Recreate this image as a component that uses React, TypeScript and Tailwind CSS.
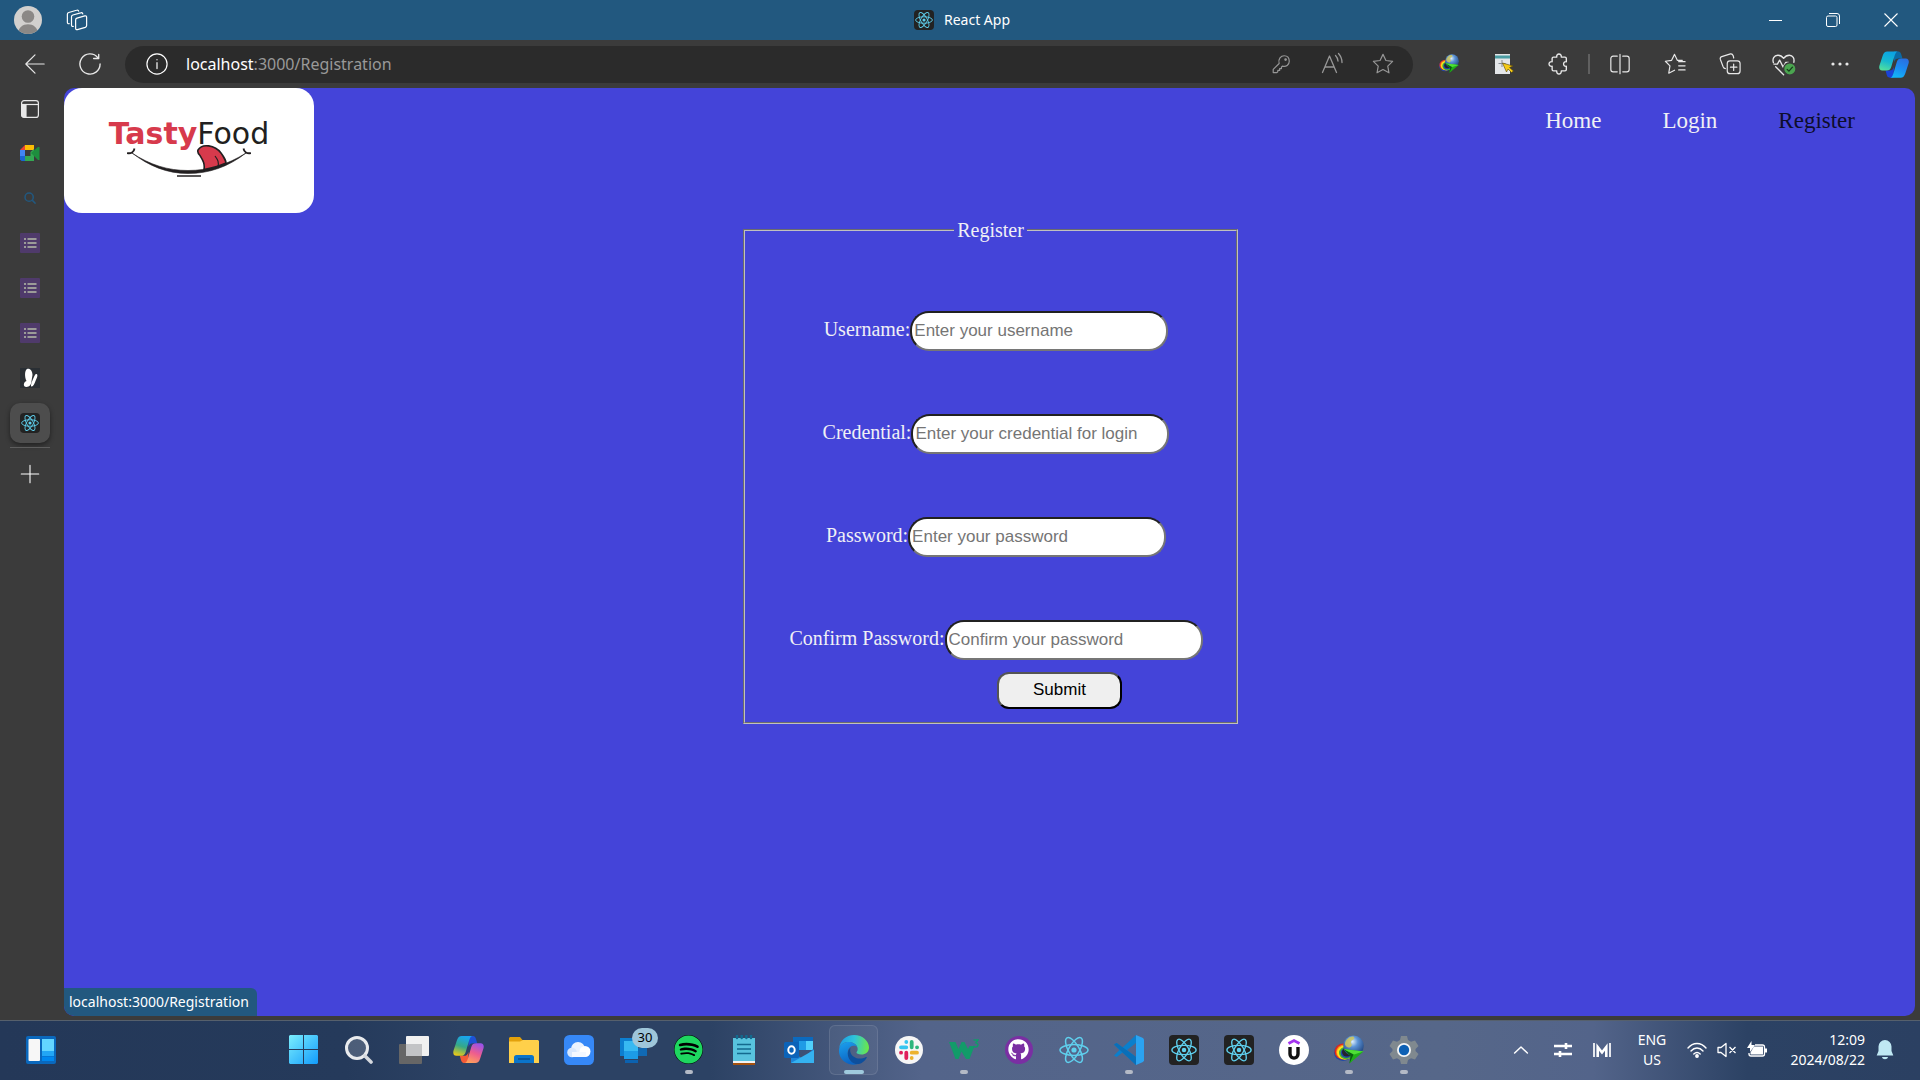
import type { ReactNode } from "react";
import { FaGithub, FaSpotify } from "react-icons/fa";

type IconProps = { className?: string };

function ReactAtom({ className }: IconProps) {
  return (
    <svg viewBox="0 0 30 30" className={className} fill="none" stroke="#5fd0ee" strokeWidth="1.5" aria-hidden="true">
      <ellipse cx="15" cy="15" rx="14" ry="5.4" />
      <ellipse cx="15" cy="15" rx="14" ry="5.4" transform="rotate(60 15 15)" />
      <ellipse cx="15" cy="15" rx="14" ry="5.4" transform="rotate(120 15 15)" />
      <circle cx="15" cy="15" r="2.6" fill="#5fd0ee" stroke="none" />
    </svg>
  );
}

function ReactTile({ size }: { size: "sm" | "lg" }) {
  return size === "sm" ? (
    <span className="flex size-5 items-center justify-center rounded-sm bg-[#222]">
      <ReactAtom className="size-[18px]" />
    </span>
  ) : (
    <span className="flex size-[30px] items-center justify-center rounded bg-[#222]">
      <ReactAtom className="size-[26px]" />
    </span>
  );
}

function Line({ children, className = "size-6", w = 1.3 }: { children: ReactNode; className?: string; w?: number }) {
  return (
    <svg viewBox="0 0 24 24" className={className} fill="none" stroke="currentColor" strokeWidth={w} strokeLinecap="round" strokeLinejoin="round" aria-hidden="true">
      {children}
    </svg>
  );
}

function IdmIcon({ className }: IconProps) {
  return (
    <svg viewBox="0 0 30 30" className={className} aria-hidden="true">
      <defs>
        <radialGradient id="globe" cx="0.45" cy="0.3" r="0.75">
          <stop offset="0" stopColor="#dfeefb" />
          <stop offset="0.35" stopColor="#5b93d6" />
          <stop offset="1" stopColor="#17376f" />
        </radialGradient>
      </defs>
      <ellipse cx="9" cy="17.500" rx="9" ry="8.500" fill="#1f49a8" />
      <ellipse cx="9.500" cy="16.500" rx="9" ry="8" fill="#de2a1f" />
      <ellipse cx="10.500" cy="17" rx="8.500" ry="7.500" fill="#f58a1c" />
      <ellipse cx="11" cy="17.500" rx="8" ry="7" fill="#ffe01f" />
      <ellipse cx="12" cy="18" rx="7" ry="6.200" fill="#45b52f" />
      <ellipse cx="12.500" cy="18" rx="5.800" ry="5" fill="#2146a8" />
      <ellipse cx="13" cy="17" rx="5" ry="4.500" fill="#22252c" />
      <circle cx="19.500" cy="10.800" r="10.300" fill="url(#globe)" />
      <path d="M11 8c1-4 5-7 8-6.500 2 .6 1.500 3-.5 3.500s-2 2.500-1 4-1 4-3 3.500-4-2-3.500-4.500z" fill="#cfc55a" opacity=".85" />
      <path d="M9.500 14 29.500 16.500 15.500 28.500l1-7.500z" fill="#1fae19" />
      <path d="m9.500 14 7 7-1 7.500 4-9z" fill="#0a5e10" />
      <path d="m9.500 14 20 2.500-9.500 3z" fill="#4fe036" />
    </svg>
  );
}

function CopilotIcon({ className, warm }: IconProps & { warm?: boolean }) {
  const a = warm ? "cw1" : "cb1";
  const b = warm ? "cw2" : "cb2";
  return (
    <svg viewBox="0 0 32 28" className={className} aria-hidden="true">
      <defs>
        <linearGradient id={a} x1="0.5" y1="0" x2="0.2" y2="1">
          <stop offset="0" stopColor={warm ? "#19a6ee" : "#0ba3e3"} />
          <stop offset="0.5" stopColor={warm ? "#35a987" : "#17b8cf"} />
          <stop offset="1" stopColor={warm ? "#f0cb15" : "#55e29b"} />
        </linearGradient>
        <linearGradient id={b} x1="0.7" y1="0" x2="0.3" y2="1">
          <stop offset="0" stopColor={warm ? "#9a52e8" : "#2a6fe0"} />
          <stop offset="0.5" stopColor={warm ? "#ee5d8e" : "#1b8cf2"} />
          <stop offset="1" stopColor={warm ? "#ffa15c" : "#12b7f7"} />
        </linearGradient>
      </defs>
      <path d="M16 0h4c3 0 3.500 2 4.300 5l.7 2.500h-4c-3 0-4 1-5 4z" fill={warm ? "#1e52d6" : "#0b6aa5"} />
      <path d="M15.500 28H12c-3 0-3.500-2-4.300-5L7 20.500h4c3 0 4-1 5-4z" fill={warm ? "#f35b37" : "#1a43d8"} />
      <path d="M9 0h11c-2 .6-2.500 2-3.300 4.500l-3.600 12c-.9 3-2.300 4-5.100 4H3.500C.5 20.500-.3 18 .5 15L4 4.500C5 1.500 6.300 0 9 0z" fill={`url(#${a})`} />
      <path d="M23 28H12c2-.6 2.500-2 3.300-4.500l3.600-12c.9-3 2.300-4 5.100-4h4.500c3 0 3.800 2.500 3 5.500L28 23.500c-1 3-2.300 4.500-5 4.500z" fill={`url(#${b})`} />
    </svg>
  );
}

function EdgeIcon() {
  return (
    <svg viewBox="0 0 30 30" className="size-[30px]" aria-hidden="true">
      <defs>
        <linearGradient id="eg" x1="0" y1="0.3" x2="1" y2="0.4">
          <stop offset="0" stopColor="#1b9ce8" />
          <stop offset="0.5" stopColor="#2fc4d9" />
          <stop offset="1" stopColor="#6ae849" />
        </linearGradient>
        <linearGradient id="eb" x1="0" y1="0" x2="0.3" y2="1">
          <stop offset="0" stopColor="#1ba1ee" />
          <stop offset="1" stopColor="#0c65c4" />
        </linearGradient>
      </defs>
      <path d="M.2 13.500C1 5.500 7 0 15 0c9 0 15 6.500 15 12.500 0 4.500-3.500 7-7.500 7-3.500 0-5-1.200-5-2 0-.7 1.200-1.200 1.200-3.500C18.700 10 14.500 7 9.500 7 5 7 1.500 9.500.2 13.500z" fill="url(#eg)" />
      <path d="M.2 13.500C1.500 9.500 5 7 9.500 7c4 0 7.500 2 8.700 5-1-1-2.500-1.500-4-1.200C10 11.500 8 15.500 9 20c1 5 5 8.500 10 9-7 2.500-17-1.500-18.800-10.500C-.1 17 0 15 .2 13.500z" fill="url(#eb)" />
      <path d="M11.500 12.500C8 16 8 21 11 25c2.500 3.500 6.500 4.500 9 4 3-.8 6-3.200 7.700-6.300.3-.5-.2-.9-.7-.6-7 3.500-14 .4-15.500-4.600-.5-1.800-.4-3.500 0-5z" fill="#0e4f9c" />
    </svg>
  );
}

function SlackIcon() {
  return (
    <svg viewBox="0 0 28 28" className="size-7" aria-hidden="true">
      <circle cx="14" cy="14" r="14" fill="#f6f6f6" />
      <g strokeWidth="3.800" strokeLinecap="round">
        <path d="M11.300 6v.1M6 11.300h5.300" stroke="#36c5f0" />
        <path d="M16.700 6v5.300M22 11.300h.1" stroke="#2eb67d" />
        <path d="M16.700 16.700H22M16.700 22v.1" stroke="#ecb22e" />
        <path d="M11.300 16.700V22M6 16.700h.1" stroke="#e01e5a" />
      </g>
    </svg>
  );
}

function WidgetsIcon() {
  return (
    <svg viewBox="0 0 30 28" className="h-7 w-[30px]" aria-hidden="true">
      <rect width="30" height="28" rx="2" fill="#0a68bd" />
      <rect x="2.500" y="3" width="11.500" height="22" rx="1" fill="#f7f7f7" />
      <path d="M16 3h12v12H16z" fill="#63d5ff" />
      <path d="M16 15h12v5H16z" fill="#22a6f5" />
      <path d="M16 20.500h12V25H16z" fill="#0087ee" />
    </svg>
  );
}

function StartIcon() {
  return (
    <svg viewBox="0 0 29 29" className="size-[29px]" aria-hidden="true">
      <defs>
        <linearGradient id="win" gradientUnits="userSpaceOnUse" x1="0" y1="0" x2="29" y2="29">
          <stop offset="0" stopColor="#7beefd" />
          <stop offset="1" stopColor="#129bfb" />
        </linearGradient>
      </defs>
      <path d="M1 0h13v14H0V1zM15 0h13l1 1v13H15zM0 15h14v14H1l-1-1zM15 15h14v13l-1 1H15z" fill="url(#win)" />
    </svg>
  );
}

function SearchIcon() {
  return (
    <svg viewBox="0 0 28 28" className="size-7" aria-hidden="true">
      <circle cx="12" cy="12" r="10.500" fill="#ffffff" fillOpacity=".18" stroke="#e9ebee" strokeWidth="3" />
      <path d="m20 20 6 6" stroke="#d5d9df" strokeWidth="3.600" strokeLinecap="round" />
    </svg>
  );
}

function TaskViewIcon() {
  return (
    <svg viewBox="0 0 30 28" className="h-7 w-[30px]" aria-hidden="true">
      <rect y="8" width="23" height="20" rx="1" fill="#666" />
      <rect x="7" width="23" height="20" rx="1" fill="#f1f1f1" />
      <path d="M7 8h16v12H7z" fill="#c3c4c6" />
    </svg>
  );
}

function ExplorerIcon() {
  return (
    <svg viewBox="0 0 30 28" className="h-7 w-[30px]" aria-hidden="true">
      <path d="M1 1h10l2.500 3H28v5H0V2z" fill="#e3a10b" />
      <path d="M0 5.500h11L14 4h15l1 1v22H0z" fill="#ffd04a" />
      <path d="M5 27v-5.500A2.500 2.500 0 0 1 7.500 19h15a2.500 2.500 0 0 1 2.500 2.500V27z" fill="#0b74ca" />
      <path d="M9 23h12" stroke="#0a4b88" strokeWidth="1.400" />
    </svg>
  );
}

function CloudIcon() {
  return (
    <svg viewBox="0 0 30 30" className="size-[30px]" aria-hidden="true">
      <rect width="30" height="30" rx="5.500" fill="#3688f7" />
      <circle cx="14" cy="14" r="7" fill="#eaf2fe" />
      <circle cx="8" cy="17.500" r="4.800" fill="#d8e7fd" />
      <circle cx="21" cy="16.500" r="5.500" fill="#fff" />
      <path d="M8 17h14v5H8z" fill="#f4f8ff" />
    </svg>
  );
}

function PhoneLinkIcon() {
  return (
    <span className="relative block">
      <svg viewBox="0 0 27 27" className="size-[27px]" aria-hidden="true">
        <path d="M0 2h14v18H0z" fill="#0d7fd0" />
        <path d="M12 12h15v8H12z" fill="#1069b4" />
        <path d="M4 5h14v18H4z" fill="#37b9f2" />
        <path d="M4 15h14v8H4z" fill="#1c9be6" />
        <path d="M5 24h13v3H5z" fill="#0c62b0" />
      </svg>
      <span className="absolute -top-2 left-3 flex h-5 w-[26px] items-center justify-center rounded-full bg-[#9ec6da] text-[13px] text-black">30</span>
    </span>
  );
}

function NotepadIcon() {
  return (
    <svg viewBox="0 0 22 30" className="h-[30px] w-[22px]" aria-hidden="true">
      <path d="M0 26h22v4H0z" fill="#a5520e" />
      <path d="M0 3h22v25H0z" fill="#58c3de" />
      <path d="M0 26h22v2H0z" fill="#f2f2f2" />
      <path d="M4 9.500h14M4 14h14M4 18.500h14" stroke="#136a8e" strokeWidth="1.600" />
      <path d="M4 0v3M8.700 0v3M13.400 0v3M18 0v3" stroke="#136a8e" strokeWidth="2.400" strokeLinecap="round" />
    </svg>
  );
}

function OutlookIcon() {
  return (
    <svg viewBox="0 0 30 28" className="h-7 w-[30px]" aria-hidden="true">
      <path d="M9 1h20v12H9z" fill="#0b6abf" />
      <path d="M15 5h7v9h-7z" fill="#1f9be6" />
      <path d="M22 5h7v9h-7z" fill="#50d0fb" />
      <path d="m29 13 1 1v13H7V15l12 8z" fill="#1c84d8" />
      <path d="m30 14-23 13h23z" fill="#35b2f0" />
      <rect y="6" width="15" height="16" rx="1.500" fill="#0c63b8" />
      <ellipse cx="7.500" cy="14" rx="3.200" ry="3.700" fill="none" stroke="#fff" strokeWidth="2" />
    </svg>
  );
}

function W3Icon() {
  return (
    <svg viewBox="0 0 30 22" className="h-[22px] w-[30px]" fill="#129b69" aria-hidden="true">
      <path d="M0 3h6.500l3 7 3-7h3l3.500 7 1.500-3h5L20.500 20H17l-4.500-7.500L9.500 20H6.500z" />
      <path d="M24.500 1h4.500l-2.200 2.800c3.200.6 2.500 4.200-.4 4.200-1 0-1.600-.4-2-1.200" fill="none" stroke="#129b69" strokeWidth="1.500" />
    </svg>
  );
}

function VsCodeIcon() {
  return (
    <svg viewBox="0 0 30 30" className="size-[30px]" aria-hidden="true">
      <path d="M22 0 8.500 12.500 2.700 8 0 9.500 5.500 15 0 20.500 2.700 22l5.800-4.500L22 30V22l-9-7 9-7z" fill="#0b7fcc" />
      <path d="m0 9.500 2.700-1.500L22 22v8z" fill="#0a6fb8" />
      <path d="m22 0 7 3 1 1.500v21L29 27l-7 3z" fill="#2ba3f1" />
    </svg>
  );
}

function UdemyIcon() {
  return (
    <svg viewBox="0 0 30 30" className="size-[30px]" fill="none" aria-hidden="true">
      <circle cx="15" cy="15" r="15" fill="#fff" />
      <path d="m9.500 8.500 5.500-3 5.500 3" stroke="#a435f0" strokeWidth="2.800" />
      <path d="M11 12v7c0 5.500 8 5.500 8 0v-7" stroke="#111" strokeWidth="3.400" />
    </svg>
  );
}

function SettingsIcon() {
  return (
    <svg viewBox="0 0 30 30" className="size-[30px]" aria-hidden="true">
      <path d="M12 1h6l1 4 3 1.700 4-1.200 3.500 5.500-3 3v2l3 3-3.500 5.500-4-1.200L19 25l-1 4h-6l-1-4-3-1.700-4 1.200L.5 19l3-3v-2l-3-3L4 5.500l4 1.200L11 5z" fill="#80898f" />
      <circle cx="15" cy="15" r="7" fill="#f4f6f7" />
      <circle cx="15" cy="15" r="5.200" fill="#0e61b4" />
    </svg>
  );
}

function TitleBar() {
  return (
    <header className="grid h-10 shrink-0 grid-cols-[1fr_auto_1fr] items-center bg-[#22587f] text-white">
      <div className="flex items-center gap-6 pl-[14px]">
        <button type="button" aria-label="Profile">
          <svg viewBox="0 0 28 28" className="size-7" aria-hidden="true">
            <clipPath id="av"><circle cx="14" cy="14" r="14" /></clipPath>
            <g clipPath="url(#av)">
              <path d="M0 0h28v28H0z" fill="#d2d0ce" />
              <circle cx="14" cy="10.500" r="6.300" fill="#8b8886" />
              <path d="M4 28c0-13 20-13 20 0z" fill="#8b8886" />
            </g>
          </svg>
        </button>
        <button type="button" aria-label="Workspaces">
          <Line className="size-[22px]">
            <path d="M12 10 20.500 7.500c1.200-.3 2 .2 2 1.500v9c0 1-.5 1.600-1.500 2L12.500 22.500c-1.200.3-2-.3-2-1.500v-9c0-1.200.5-1.700 1.500-2z" />
            <path d="M8 19c-1.200.3-2-.3-2-1.500V8.500c0-1 .5-1.700 1.500-2L16 4.200c1.300-.4 2 0 2.300 1.200" />
            <path d="M3.500 16c-1.200.3-2-.3-2-1.500V5.800c0-1 .5-1.700 1.500-2l8.500-2.400c1.300-.4 2 0 2.300 1" />
          </Line>
        </button>
      </div>
      <div className="flex items-center gap-2.5 pl-1 text-sm">
        <ReactTile size="sm" />
        <span>React App</span>
      </div>
      <div className="flex items-center justify-end">
        <button type="button" aria-label="Minimize" className="flex h-10 w-[58px] items-center justify-center">
          <span className="h-px w-[13px] bg-white" />
        </button>
        <button type="button" aria-label="Restore" className="flex h-10 w-[58px] items-center justify-center">
          <svg viewBox="0 0 14 14" className="h-3.5 w-3.5" fill="none" stroke="#fff" aria-hidden="true">
            <rect x=".5" y="3" width="10.500" height="10.500" rx="1.500" />
            <path d="M3 .5h8a2.500 2.500 0 0 1 2.500 2.500v8" />
          </svg>
        </button>
        <button type="button" aria-label="Close" className="flex h-10 w-[58px] items-center justify-center">
          <svg viewBox="0 0 14 14" className="h-3.5 w-3.5" fill="none" stroke="#fff" strokeWidth="1.100" aria-hidden="true">
            <path d="m.5.5 13 13m0-13-13 13" />
          </svg>
        </button>
      </div>
    </header>
  );
}

function ToolButton({ label, children }: { label: string; children: ReactNode }) {
  return (
    <button type="button" aria-label={label} className="flex h-10 w-[55px] shrink-0 items-center justify-center">
      {children}
    </button>
  );
}

function Toolbar() {
  return (
    <div className="flex h-12 shrink-0 items-center bg-[#3b3b3b] pl-[7px] text-[#e8e8e8]">
      <ToolButton label="Back">
        <Line className="size-[22px]"><path d="M22 12H2M12 2 2 12l10 10" /></Line>
      </ToolButton>
      <ToolButton label="Refresh">
        <Line className="size-[22px]" w={1.5}><path d="M20.500 5A11 11 0 1 0 23 12M21.500 1.500v4.500H16" /></Line>
      </ToolButton>
      <div className="ml-2 flex h-[37px] min-w-0 flex-1 items-center rounded-full bg-[#2b2b2b] pr-[19px] pl-[21px]">
        <Line className="size-[22px] shrink-0 text-white">
          <circle cx="12" cy="12" r="11" />
          <path d="M12 10.500v6.500M12 7.200v.2" />
        </Line>
        <label className="relative ml-[18px] flex-1 text-base">
          <input aria-label="Address" defaultValue="localhost:3000/Registration" className="w-full bg-transparent text-transparent outline-none" />
          <span aria-hidden="true" className="pointer-events-none absolute inset-0 text-[#999]">
            <span className="text-white">localhost</span>:3000/Registration
          </span>
        </label>
        <div className="flex w-[124px] shrink-0 items-center justify-between text-[#979797]">
          <button type="button" aria-label="Passwords">
            <Line className="size-[22px]">
              <path d="M10 11.500C8.500 6.500 12 3 15.500 3S21 5.500 21 9c0 4-3.500 6.500-7.500 5.300L12.500 15.500V17h-2v2H8.500v1.500l-1 .9H3.500v-3.600z" />
              <circle cx="17" cy="7.200" r=".8" fill="currentColor" />
            </Line>
          </button>
          <button type="button" aria-label="Read aloud">
            <Line className="size-6">
              <path d="M2.500 20.500 9.500 4l7 16.500M5 15h9M15.500 3.500c1.500 1.500 2.300 3.500 2.500 5.500M18.500 1.500c2.300 2.500 3.500 5.500 3.500 9" />
            </Line>
          </button>
          <button type="button" aria-label="Favorite">
            <Line className="size-[22px]">
              <path d="m12 1.500 3.200 6.700 7.300 1-5.300 5.100 1.300 7.300L12 18.100l-6.500 3.500 1.300-7.300L1.500 9.200l7.300-1z" />
            </Line>
          </button>
        </div>
      </div>
      <span className="w-2 shrink-0" />
      <ToolButton label="Download manager"><IdmIcon className="size-5" /></ToolButton>
      <ToolButton label="Page picker">
        <svg viewBox="0 0 20 20" className="size-5" aria-hidden="true">
          <path d="M1 0h15v20H1z" fill="#e4e6e8" />
          <path d="M1 1.500h15v3H1z" fill="#4b9da3" />
          <path d="M8 6v7M4.500 9.500h7" stroke="#858b92" />
          <path d="m8.500 9 10.500 3-3.500 1.500 4 3.500-2 1.500-3.500-3.500L12.500 18z" fill="#f5cb17" stroke="#5a4706" strokeWidth=".6" />
        </svg>
      </ToolButton>
      <ToolButton label="Extensions">
        <Line className="size-[22px]" w={1.5}>
          <path d="M6 4.500h3.500c-.6-4.500 5.500-4.500 5 0h4c1 0 1.500.5 1.500 1.500v3.500c-4-.6-4 5.600 0 5v3.500c0 1-.5 1.500-1.500 1.500h-4c.5 4.500-5.600 4.500-5 0H6c-1 0-1.500-.5-1.500-1.500v-3.500c-4.500.6-4.500-5.600 0-5V6c0-1 .5-1.500 1.500-1.500z" />
        </Line>
      </ToolButton>
      <span className="mx-[2px] h-5 w-[2px] shrink-0 bg-[#606060]" />
      <ToolButton label="Split screen">
        <Line className="size-[22px]">
          <path d="M9 3.500H4.500C3 3.500 2 4.500 2 6v12c0 1.500 1 2.500 2.500 2.500H9M15 3.500h4.500C21 3.500 22 4.500 22 6v12c0 1.500-1 2.500-2.500 2.500H15M12 1.500v21" />
        </Line>
      </ToolButton>
      <ToolButton label="Favorites">
        <Line className="size-[22px]">
          <path d="M16 9.500h7M16 14h7M16 18.500h7M20 8h-5.500L11.500 1.500 8.300 8 1.500 9l5 5-1.300 8 6.300-3.200" />
        </Line>
      </ToolButton>
      <ToolButton label="Collections">
        <Line className="size-[22px]">
          <rect x="9" y="8.500" width="14" height="14" rx="3" />
          <path d="M16 12v7M12.500 15.500h7M7 17c-1.500 0-2-.8-2.500-2L1.500 7c-.5-1.500 0-2.500 1.500-3l9.500-3c1.500-.4 2.300.3 3 2l.6 2.500" />
        </Line>
      </ToolButton>
      <ToolButton label="Browser essentials">
        <svg viewBox="0 0 28 26" className="h-[23px] w-[25px]" fill="none" stroke="currentColor" strokeWidth="1.500" strokeLinejoin="round" strokeLinecap="round" aria-hidden="true">
          <path d="M1.500 11C0 7 2 2.500 6.500 2.500c3 0 5 1.500 6.500 3.500 1.500-2 3.500-3.500 6.500-3.500 4 0 6 4 5 8M4 15.500l9 9" />
          <path d="M2 12.500h4l2.500-4.500 4 8 3-5.500h3" />
          <circle cx="20" cy="18" r="7" fill="#4ba550" stroke="#3b3b3b" />
          <path d="m17 18.500 2 2 4-4.500" stroke="#173d1b" />
        </svg>
      </ToolButton>
      <ToolButton label="More">
        <svg viewBox="0 0 18 4" className="h-1 w-[18px]" fill="currentColor" aria-hidden="true">
          <circle cx="2" cy="2" r="1.600" /><circle cx="9" cy="2" r="1.600" /><circle cx="16" cy="2" r="1.600" />
        </svg>
      </ToolButton>
      <button type="button" aria-label="Copilot" className="flex w-[53px] shrink-0 justify-center">
        <CopilotIcon className="h-[27px] w-[30px]" />
      </button>
    </div>
  );
}

function SideTab({ label, children }: { label: string; children: ReactNode }) {
  return (
    <button type="button" aria-label={label} className="flex h-[45px] w-full items-center justify-center">
      {children}
    </button>
  );
}

function NotesTile() {
  return (
    <svg viewBox="0 0 20 20" className="size-5" aria-hidden="true">
      <rect width="20" height="20" rx="1" fill="#4f3a6b" />
      <path d="M4 6h2M4 10h2M4 14h2M7.500 6h9M7.500 10h9M7.500 14h9" stroke="#9b9b98" strokeWidth="2" />
    </svg>
  );
}

function SideBar() {
  return (
    <nav aria-label="Tabs" className="flex w-16 shrink-0 flex-col items-center pr-[5px]">
      <button type="button" aria-label="Tab actions" className="flex h-[42px] w-full items-center justify-center text-[#e8e8e8]">
        <svg viewBox="0 0 18 18" className="size-[18px]" fill="none" stroke="currentColor" strokeWidth="1.200" aria-hidden="true">
          <rect x=".6" y=".6" width="16.800" height="16.800" rx="2.500" />
          <path d="M1 4.500h16" />
          <path d="M1 4.500h4V17H2l-1-1z" fill="currentColor" />
        </svg>
      </button>
      <SideTab label="Meet">
        <svg viewBox="0 0 20 16" className="h-4 w-5" aria-hidden="true">
          <path d="M5 0v5H0z" fill="#ea4335" />
          <path d="M5 0h9v5H5z" fill="#fbbc04" />
          <path d="M0 5h5v6H0z" fill="#4285f4" />
          <path d="M0 11h5v5H1.500L0 14.500z" fill="#1967d2" />
          <path d="M5 11h5.500V7L14 4v12H5z" fill="#34a853" />
          <path d="m11 8 7-6h1.500v13H18z" fill="#1e8e3e" />
        </svg>
      </SideTab>
      <SideTab label="Search">
        <svg viewBox="0 0 14 14" className="h-3 w-3" fill="none" stroke="#22587f" strokeWidth="1.800" aria-hidden="true">
          <circle cx="6" cy="6" r="4.800" /><path d="m9.500 9.500 4 4" />
        </svg>
      </SideTab>
      <SideTab label="Notes 1"><NotesTile /></SideTab>
      <SideTab label="Notes 2"><NotesTile /></SideTab>
      <SideTab label="Notes 3"><NotesTile /></SideTab>
      <SideTab label="Butterfly">
        <svg viewBox="0 0 20 20" className="size-5" aria-hidden="true">
          <path d="M0 0h20v20H0z" fill="#2a2f34" />
          <path d="M7 1c3-1 5.500 2 5.500 6l-1 6c0 3-2 6-5 6-4 0-3-5 0-6C4.500 9 4.500 2.500 7 1zM16.500 6c1.500.5 1 3-1 7-1 3-2.500 6-4 5.500s.5-5 2-8.500 2-4.500 3-4z" fill="#fff" />
        </svg>
      </SideTab>
      <SideTab label="React App">
        <span className="flex size-10 items-center justify-center rounded-[10px] bg-[#4d4d4d] shadow-[0_2px_5px_rgba(0,0,0,0.45)]">
          <ReactTile size="sm" />
        </span>
      </SideTab>
      <span className="mt-[2px] h-px w-10 bg-[#5e5e5e]" />
      <button type="button" aria-label="New tab" className="mt-4 text-white">
        <Line className="size-5" w={1.3}><path d="M12 1.500v21M1.500 12h21" /></Line>
      </button>
    </nav>
  );
}

function Logo() {
  return (
    <div className="flex h-[125px] w-[250px] flex-col items-center rounded-[18px] bg-white pt-7">
      <p className="font-['DejaVu_Sans',sans-serif] text-[30px] leading-9 text-[#221f20]">
        <span className="font-bold text-[#d73a4c]">Tasty</span>Food
      </p>
      <svg viewBox="0 0 124 34" className="-mt-2 h-[34px] w-[124px]" fill="none" aria-hidden="true">
        <path d="M5 9c18 12 36 17.500 56 17.500S100 21 119 9c-18 14-37 20.500-58 20.500S22 22 5 9z" fill="#221f20" stroke="#221f20" strokeWidth=".6" />
        <path d="M0 9c4 1 7-1 7.500-4.500M124 9c-4 1-7-1-7.500-4.500" stroke="#221f20" strokeWidth="1.800" />
        <path d="M71 6c4-7 17-5 23 3 3 4 5 9 5 10-6 3-14 5-22 6.500 1-6-1-9-4-14-1-1-3-3-2-5.500z" fill="#d73a4c" stroke="#221f20" strokeWidth="1.600" />
        <path d="M88 12c3 4 4 6 3 11" stroke="#221f20" strokeWidth="1.200" />
        <path d="M50 32h24" stroke="#221f20" strokeWidth="1.500" />
      </svg>
    </div>
  );
}

const fields = [
  { id: "username", label: "Username:", type: "text", hint: "Enter your username" },
  { id: "credential", label: "Credential:", type: "text", hint: "Enter your credential for login" },
  { id: "password", label: "Password:", type: "password", hint: "Enter your password" },
  { id: "confirm", label: "Confirm Password:", type: "password", hint: "Confirm your password" },
];

function Page() {
  return (
    <main className="relative mr-[5px] mb-1 min-w-0 flex-1 overflow-hidden rounded-[10px] bg-[#4444d9] font-['Liberation_Serif',serif] text-[#f0f0f5]">
      <div className="flex items-start justify-between">
        <Logo />
        <nav aria-label="Main" className="flex gap-[61px] pt-[19px] pr-[60px] text-[23px] leading-7">
          <a href="#home">Home</a>
          <a href="#login">Login</a>
          <a href="#register" className="text-[#0d0d2b]">Register</a>
        </nav>
      </div>
      <form className="mt-[5px] flex justify-center pl-[2px]" onSubmit={(e) => e.preventDefault()}>
        <fieldset className="w-[495px] border-2 border-[#c0c0c0] pb-[13px] [border-style:groove]">
          <legend className="mx-auto px-[3px] text-xl leading-6">Register</legend>
          <div className="flex flex-col items-center gap-[63px] pt-[67px] pl-[11px]">
            {fields.map((f) => (
              <div key={f.id} className="flex h-10 items-baseline text-xl leading-10">
                <label htmlFor={f.id}>{f.label}</label>
                <input
                  id={f.id}
                  type={f.type}
                  placeholder={f.hint}
                  className="h-10 w-[258px] rounded-[19px] border-2 border-[#767676] bg-white px-[2px] font-['Liberation_Sans',sans-serif] text-[17px] text-black [border-style:inset] placeholder:text-[#757575]"
                />
              </div>
            ))}
          </div>
          <button type="submit" className="mx-auto mt-[14px] block h-[37px] w-[125px] translate-x-[69px] rounded-xl border-2 border-black bg-[#efefef] pb-[2px] font-['Liberation_Sans',sans-serif] text-[17px] leading-none text-black [border-style:outset]">
            Submit
          </button>
        </fieldset>
      </form>
      <div className="absolute bottom-0 left-0 rounded-tr-md rounded-bl-[10px] bg-[#22587f] py-1 pr-2 pl-[5px] font-['Noto_Sans',sans-serif] text-sm leading-5 text-white">
        localhost:3000/Registration
      </div>
    </main>
  );
}

const apps: { name: string; icon: ReactNode; open?: boolean; active?: boolean }[] = [
  { name: "Start", icon: <StartIcon /> },
  { name: "Search", icon: <SearchIcon /> },
  { name: "Task view", icon: <TaskViewIcon /> },
  { name: "Copilot", icon: <CopilotIcon warm className="h-[27px] w-[31px]" /> },
  { name: "File Explorer", icon: <ExplorerIcon /> },
  { name: "Cloud", icon: <CloudIcon /> },
  { name: "Phone Link", icon: <PhoneLinkIcon /> },
  { name: "Spotify", icon: <span className="rounded-full bg-black"><FaSpotify className="size-[29px] text-[#1ed760]" /></span>, open: true },
  { name: "Notepad", icon: <NotepadIcon /> },
  { name: "Outlook", icon: <OutlookIcon /> },
  { name: "Edge", icon: <EdgeIcon />, active: true },
  { name: "Slack", icon: <SlackIcon /> },
  { name: "W3Schools", icon: <W3Icon />, open: true },
  { name: "GitHub", icon: <span className="flex size-7 items-center justify-center rounded-full bg-[#7a2fa3]"><FaGithub className="size-[21px] text-white" /></span> },
  { name: "React", icon: <ReactAtom className="size-[30px]" /> },
  { name: "Visual Studio Code", icon: <VsCodeIcon />, open: true },
  { name: "React App", icon: <ReactTile size="lg" /> },
  { name: "React App 2", icon: <ReactTile size="lg" /> },
  { name: "Udemy", icon: <UdemyIcon /> },
  { name: "Internet Download Manager", icon: <IdmIcon className="size-[30px]" />, open: true },
  { name: "Settings", icon: <SettingsIcon />, open: true },
];

function TaskBar() {
  return (
    <footer className="flex h-[60px] shrink-0 items-center border-t border-[#56606c] bg-[linear-gradient(90deg,#243858_0%,#253a5b_18%,#2c4264_24%,#2c4264_37%,#53648a_48%,#566789_75%,#53648a_83%,#2c4264_91%,#2b4062_100%)] pb-[2px] pl-[26px] text-white">
      <button type="button" aria-label="Widgets"><WidgetsIcon /></button>
      <div className="ml-[220px] flex">
        {apps.map((a) => (
          <div key={a.name} className="relative flex w-[55px] justify-center">
            <button
              type="button"
              aria-label={a.name}
              className={
                a.active
                  ? "flex h-[50px] w-[49px] items-center justify-center rounded-md border border-white/10 bg-white/5"
                  : "flex h-[50px] w-[49px] items-center justify-center"
              }
            >
              {a.icon}
            </button>
            {a.open && <span className="absolute bottom-[1px] h-1 w-2 rounded-full bg-[#b4bac6]" />}
            {a.active && <span className="absolute bottom-[1px] h-1 w-5 rounded-full bg-[#9fcadd]" />}
          </div>
        ))}
      </div>
      <div className="ml-auto flex items-center pr-[26px] text-sm leading-5">
        <button type="button" aria-label="Show hidden icons">
          <Line className="size-[18px]" w={2}><path d="m3.500 16 8.500-8 8.500 8" /></Line>
        </button>
        <svg viewBox="0 0 18 16" className="ml-6 h-4 w-[18px]" fill="none" stroke="#fff" strokeWidth="2.600" aria-hidden="true">
          <path d="M0 4h18M12 1v6M0 12h18M6 9v6" />
        </svg>
        <svg viewBox="0 0 18 14" className="ml-[21px] h-3.5 w-[18px]" fill="none" stroke="#fff" aria-hidden="true">
          <path d="M1 0v14M17 0v14" strokeWidth="1.700" />
          <path d="M4.700 14V4L9 9.500 13.300 4v10" strokeWidth="2.600" />
        </svg>
        <div className="ml-6 w-[34px] text-center">
          <div>ENG</div>
          <div>US</div>
        </div>
        <svg viewBox="0 0 20 16" className="ml-[18px] h-4 w-5" fill="none" stroke="#fff" strokeWidth="1.400" strokeLinecap="round" aria-hidden="true">
          <path d="M1 6c5-6 13-6 18 0M4 9c3.500-4 8.500-4 12 0M6.800 12c2-2 4.400-2 6.400 0" />
          <circle cx="10" cy="14" r="1.200" fill="#fff" />
        </svg>
        <svg viewBox="0 0 20 16" className="ml-2.5 h-4 w-5" fill="none" stroke="#fff" strokeWidth="1.300" strokeLinejoin="round" aria-hidden="true">
          <path d="M1 5.500h3L9 1.500v13l-5-4H1zM12.500 5l6 6m0-6-6 6" />
        </svg>
        <svg viewBox="0 0 20 17" className="ml-2.5 h-[17px] w-5" aria-hidden="true">
          <path d="M8 4h7.500c1.200 0 2 .8 2 2v7c0 1.200-.8 2-2 2H4c-1.200 0-2-.8-2-2v-1" fill="none" stroke="#fff" strokeWidth="1.300" />
          <path d="M7 5.500h9v8H3.500v-2zM18 7.500h2v4h-2zM4.500 0v4H8L3 11V7H0z" fill="#fff" />
        </svg>
        <div className="ml-5 w-[78px] text-right">
          <div>12:09</div>
          <div>2024/08/22</div>
        </div>
        <svg viewBox="0 0 18 20" className="ml-[11px] h-5 w-[18px]" fill="#bfe8f3" aria-hidden="true">
          <path d="M2.500 6.500a6.500 6.500 0 0 1 13 0V11l1.800 4.500H.7L2.500 11zM6 17h6c-.5 3-5.500 3-6 0z" />
        </svg>
      </div>
    </footer>
  );
}

export default function App() {
  return (
    <div className="flex min-h-screen flex-col bg-[#3b3b3b] font-['Noto_Sans',sans-serif]">
      <TitleBar />
      <Toolbar />
      <div className="flex flex-1">
        <SideBar />
        <Page />
      </div>
      <TaskBar />
    </div>
  );
}
